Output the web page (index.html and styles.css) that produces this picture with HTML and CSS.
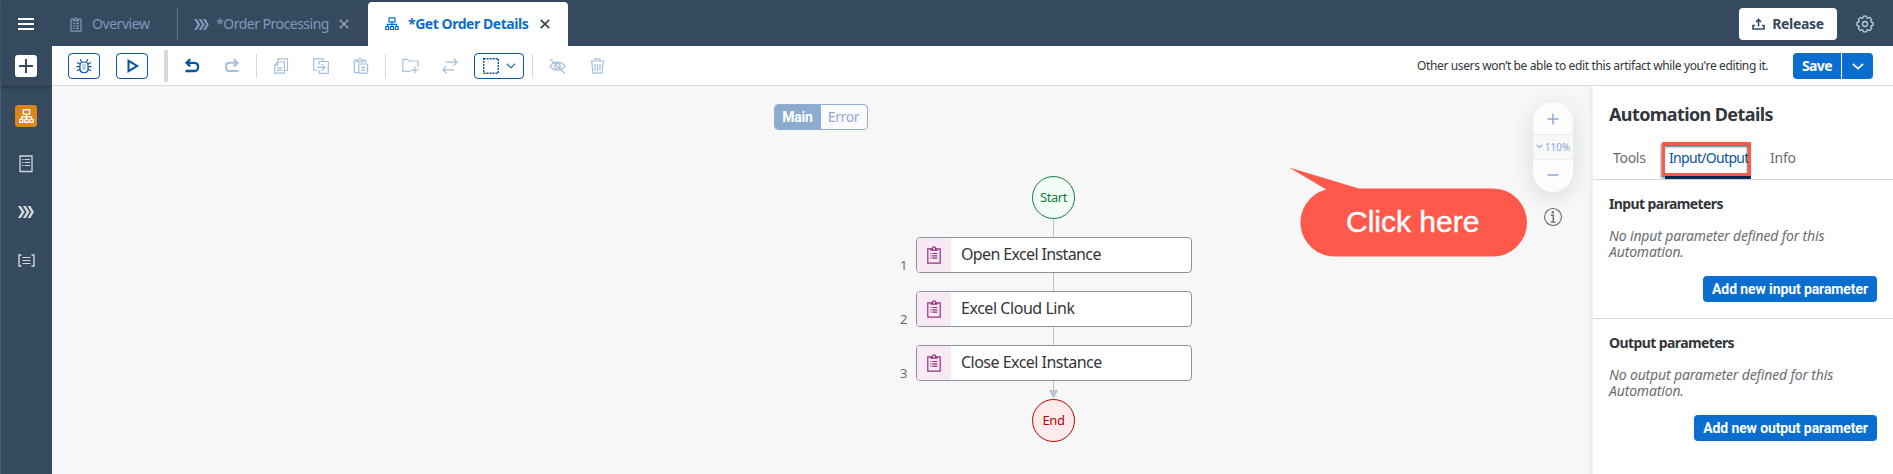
FILE: index.html
```html
<!DOCTYPE html>
<html lang="en">
<head>
<meta charset="utf-8">
<title>Automation Editor</title>
<link rel="stylesheet" href="styles.css">
</head>
<body>
<svg class="defs" aria-hidden="true">
  <symbol id="tree" viewBox="0 0 14 14"><path d="M4 .8h6v4H4zM7 4.8v4.4M2.4 9.5V7.3h9.2v2.2M.7 9.6h2.9v2.9H.7zM5.5 9.6h2.9v2.9H5.5zM10.3 9.6h2.9v2.9h-2.9z" fill="none" stroke="currentColor" stroke-width="1.2"/></symbol>
  <symbol id="chevrons" viewBox="0 0 16 12"><path d="M0 .1h2.8L6.6 6l-3.8 5.9H0L3.7 6zM4.9.1h2.8L11.5 6l-3.8 5.9H4.9L8.6 6zM9.6.1h2.8L16 6l-3.6 5.9H9.6L13.3 6z" fill="currentColor"/></symbol>
  <symbol id="close" viewBox="0 0 10 10"><path d="M.8.8l8.4 8.4M9.2.8L.8 9.2" fill="none" stroke="currentColor" stroke-width="1.8"/></symbol>
  <symbol id="clipboard" viewBox="0 0 14 18"><path d="M4 2.9H.8v14.3h12.4V2.9H10M4 4.2V2.8h1.4C5.4.3 8.6.3 8.6 2.8H10v1.4z" fill="none" stroke="currentColor" stroke-width="1.2"/><path d="M3.4 7.5h1M5.3 7.5h5M3.4 9.8h1M5.3 9.8h5M3.4 12.1h1M5.3 12.1h5" stroke="currentColor" stroke-width="1.2"/></symbol>
</svg>
<div class="app">
  <nav class="rail">
    <div class="rail-top">
      <svg class="menu" width="16" height="12" viewBox="0 0 16 12"><path d="M0 1h16M0 6h16M0 11h16" stroke="#fff" stroke-width="2"/></svg>
      <span class="rail-box add"><svg width="22" height="22" viewBox="0 0 22 22"><path d="M11 4v14M4 11h14" stroke="#354a5f" stroke-width="2"/></svg></span>
    </div>
    <span class="rail-box selected"><svg width="15" height="15"><use href="#tree"/></svg></span>
    <span class="rail-box"><svg width="14" height="18" viewBox="0 0 14 18"><path d="M1 1h12v15.5H1z" fill="none" stroke="currentColor" stroke-width="1.3"/><path d="M3 4.5h1.5M5.5 4.5H11M3 7.5h1.5M5.5 7.5H11M3 10.5h1.5M5.5 10.5H11" stroke="currentColor"/></svg></span>
    <span class="rail-box"><svg width="16" height="12"><use href="#chevrons"/></svg></span>
    <span class="rail-box"><svg width="17" height="13" viewBox="0 0 17 13"><path d="M3.5 1H1v11h2.5M13.5 1H16v11h-2.5" fill="none" stroke="currentColor" stroke-width="1.4"/><path d="M4.5 3.5h8M4.5 6.5h8M4.5 9.5h8" stroke="currentColor" stroke-width="1.2"/></svg></span>
  </nav>
  <div class="main">
    <header class="header">
      <div class="tab overview">
        <svg width="12" height="15" viewBox="0 0 12 15"><path d="M3.5 2.2H1v12h10v-12H8.5M3.5 3.6V2H5c0-1.7 2-1.7 2 0h1.5v1.6z" fill="none" stroke="currentColor" stroke-width="1.2"/><path d="M3 6.4h1.6M5.8 6.4H9M3 8.9h1.6M5.8 8.9H9M3 11.4h1.6M5.8 11.4H9" stroke="currentColor" stroke-width="1.3"/></svg>
        <span class="tab-text t-overview">Overview</span>
      </div>
      <div class="tab processing">
        <svg width="15" height="11"><use href="#chevrons"/></svg>
        <span class="tab-text t-processing">*Order Processing</span>
        <svg class="x" width="10" height="10"><use href="#close"/></svg>
      </div>
      <div class="tab active">
        <svg width="14" height="14"><use href="#tree"/></svg>
        <span class="tab-text t-details">*Get Order Details</span>
        <svg class="x" width="10" height="10"><use href="#close"/></svg>
      </div>
      <button class="release"><svg width="13" height="12" viewBox="0 0 13 12"><path d="M3 7.5H1V11h11V7.5h-2M6.5 8.5V2M4 4l2.5-2.6L9 4" fill="none" stroke="currentColor" stroke-width="1.6"/></svg><span>Release</span></button>
      <svg class="gear" width="18" height="18" viewBox="0 0 18 18" fill="none" stroke="currentColor" stroke-width="1.3"><path d="M7.5 1.1h3l.4 1.7 1.2.5 1.5-.9 2.1 2.1-.9 1.5.5 1.2 1.7.4v2.8l-1.7.4-.5 1.2.9 1.5-2.1 2.1-1.5-.9-1.2.5-.4 1.7h-3l-.4-1.7-1.2-.5-1.5.9-2.1-2.1.9-1.5-.5-1.2-1.7-.4V7.6l1.7-.4.5-1.2-.9-1.5 2.1-2.1 1.5.9 1.2-.5z"/><circle cx="9" cy="9" r="2.5"/></svg>
    </header>
    <div class="toolbar">
      <span class="boxed"><svg width="16" height="16" viewBox="0 0 16 16" fill="none" stroke="currentColor"><path d="M4 7c0-4 8-4 8 0v4c0 5-8 5-8 0zM5.5 3.8L4.2 1.2M10.5 3.8l1.3-2.6M4 6L1 4.5M4 8.7H.5M4 11.2l-3 1.6M12 6l3-1.5M12 8.7h3.5M12 11.2l3 1.6" stroke-width="1.2"/><path d="M6 7h4M6 9h4M6 11h4" stroke-opacity=".5"/></svg></span>
      <span class="boxed play"><svg width="14" height="16" viewBox="0 0 14 16"><path d="M2.5 2.8v10.4L11.2 8z" fill="none" stroke="currentColor" stroke-width="2"/></svg></span>
      <i class="thick"></i>
      <svg class="undo" width="16" height="16" viewBox="0 0 16 16"><path d="M6.2 1.2L2.5 4.8l3.7 3.6M3 4.8h7.5c4.8 0 4.8 8.2 0 8.2H1.5" fill="none" stroke="currentColor" stroke-width="2.3"/></svg>
      <svg class="ico redo" width="16" height="16" viewBox="0 0 16 16"><path d="M9.8 1.2l3.7 3.6-3.7 3.6M13 4.8H5.5C.7 4.8.7 13 5.5 13h9" fill="none" stroke="currentColor" stroke-width="2.1"/></svg>
      <i class="sep s1"></i>
      <svg class="ico copy" width="16" height="16" viewBox="0 0 16 16" fill="none" stroke="currentColor" stroke-width="1.2"><path d="M4.6 4h6.8v11.2H1.6V7.2zM1.8 7.2h3V4.3M5 4V.9h9.5v11.6h-3M3.8 9.8h5.4M3.8 12.2h5.4"/></svg>
      <svg class="ico dup" width="16" height="16" viewBox="0 0 16 16" fill="none" stroke="currentColor" stroke-width="1.2"><path d="M4.2 12.2H.7V.8h9.6v2.6M6.2 6.4V3.5h9.1v11.8H6.2v-3M4 9.4h7.5M8.5 6l3.3 3.4-3.3 3.4"/></svg>
      <svg class="ico paste" width="16" height="16" viewBox="0 0 16 16" fill="none" stroke="currentColor" stroke-width="1.2"><path d="M5.3 14.7H1.4V2.3H4M9.8 2.3h2.8v2.6M4 3.8V2.2h1.4c0-2 3.1-2 3.1 0h1.4v1.6zM5.8 6h8.8v9.2H5.8zM8 9.7h4.4M8 12.2h4.4"/></svg>
      <i class="sep s2"></i>
      <svg class="ico folder" width="17" height="16" viewBox="0 0 17 16" fill="none" stroke="currentColor" stroke-width="1.2"><path d="M8.5 13.4H.8V1.4h4.6L7 3h9v6M12.8 8.7v6.8M9.3 12.1h7"/></svg>
      <svg class="ico swap" width="16" height="16" viewBox="0 0 16 16" fill="none" stroke="currentColor" stroke-width="1.3"><path d="M4 4.2h11M11.6.8L15 4.2l-3.4 3.4M12 11.8H1M4.4 8.4L1 11.8l3.4 3.4"/></svg>
      <span class="boxed select"><svg width="16" height="16" viewBox="0 0 16 16"><path d="M.7.7h14.6v14.6H.7z" fill="none" stroke="currentColor" stroke-width="1.4" stroke-dasharray="2 1"/></svg><svg width="10" height="6" viewBox="0 0 10 6"><path d="M.7.7L5 4.8 9.3.7" fill="none" stroke="#4d82bf" stroke-width="1.5"/></svg></span>
      <i class="sep s3"></i>
      <svg class="ico eye" width="17" height="16" viewBox="0 0 17 16" fill="none" stroke="currentColor" stroke-width="1.2"><path d="M1 8.2C4.8 2.8 12.2 2.8 16 8.2 12.2 13.6 4.8 13.6 1 8.2zM1 1l15 14.5"/><circle cx="8.5" cy="8.2" r="2.8"/></svg>
      <svg class="ico trash" width="15" height="16" viewBox="0 0 15 16" fill="none" stroke="currentColor" stroke-width="1.2"><path d="M.5 3h14M5 2.8V.8h5v2M1.8 3.2l1 12h9.4l1-12M5 6v6.8M7.5 6v6.8M10 6v6.8"/></svg>
      <span class="lock-note">Other users won’t be able to edit this artifact while you're editing it.</span>
      <div class="split"><button class="save">Save</button><button class="more"><svg width="12" height="7" viewBox="0 0 12 7"><path d="M.8.8L6 5.6 11.2.8" fill="none" stroke="#fff" stroke-width="1.7"/></svg></button></div>
    </div>
    <div class="work">
      <section class="canvas">
        <div class="segmented"><span class="seg on">Main</span><span class="seg">Error</span></div>
        <div class="flow">
          <div class="terminal start">Start</div>
          <i class="link"></i>
          <div class="step"><span class="num">1</span><span class="step-icon"><svg width="14" height="18"><use href="#clipboard"/></svg></span><span class="name n1">Open Excel Instance</span></div>
          <i class="link"></i>
          <div class="step"><span class="num">2</span><span class="step-icon"><svg width="14" height="18"><use href="#clipboard"/></svg></span><span class="name n2">Excel Cloud Link</span></div>
          <i class="link"></i>
          <div class="step"><span class="num">3</span><span class="step-icon"><svg width="14" height="18"><use href="#clipboard"/></svg></span><span class="name n3">Close Excel Instance</span></div>
          <svg class="arrow" width="9" height="18" viewBox="0 0 9 18"><path d="M4.5 0v10" stroke="#bfbfbf"/><path d="M0 9h9L4.5 18z" fill="#c4c4c4"/></svg>
          <div class="terminal end">End</div>
        </div>
        <div class="zoom">
          <span class="zoom-in"><svg width="12" height="12" viewBox="0 0 12 12"><path d="M6 .5v11M.5 6h11" stroke="currentColor" stroke-width="1.5"/></svg></span>
          <span class="zoom-level"><svg width="7" height="5" viewBox="0 0 7 5"><path d="M.6 1l2.9 2.6L6.4 1" fill="none" stroke="currentColor" stroke-width="1.1"/></svg>110%</span>
          <span class="zoom-out"><svg width="12" height="12" viewBox="0 0 12 12"><path d="M.5 6h11" stroke="currentColor" stroke-width="1.5"/></svg></span>
        </div>
        <svg class="info" width="20" height="20" viewBox="0 0 20 20"><circle cx="10" cy="10" r="8.5" fill="none" stroke="#6a6d70" stroke-width="1.1"/><circle cx="9.8" cy="5.3" r="1.2" fill="#6a6d70"/><path d="M7.8 8.2h2.5v6.6M7.6 15.1h5" fill="none" stroke="#6a6d70" stroke-width="1.4"/></svg>
        <div class="callout">
          <svg width="240" height="92" viewBox="0 0 240 92"><path d="M0 .5L70 21.5H204a34 34 0 0 1 0 68H45.5a34 34 0 0 1-8.2-67z" fill="#ff594c"/></svg>
          <span class="callout-text">Click here</span>
        </div>
      </section>
      <aside class="panel">
        <h2 class="title"><span>Automation Details</span></h2>
        <div class="ptabs"><span class="p-tools">Tools</span><span class="p-io">Input/Output<i class="highlight"></i></span><span class="p-info">Info</span></div>
        <section class="params">
          <h3 class="h-in">Input parameters</h3>
          <p><span class="i1">No input parameter defined for this</span><br><span class="i2">Automation.</span></p>
          <button class="add-in"><span>Add new input parameter</span></button>
        </section>
        <section class="params second">
          <h3 class="h-out">Output parameters</h3>
          <p><span class="o1">No output parameter defined for this</span><br><span class="i2">Automation.</span></p>
          <button class="add-out"><span>Add new output parameter</span></button>
        </section>
      </aside>
    </div>
  </div>
</div>
</body>
</html>
```
FILE: styles.css
```css
* { box-sizing: border-box; }
body { margin: 0; font: 14px/16px "Noto Sans", "Open Sans", sans-serif; color: #32363a; overflow: hidden; }
svg { display: block; flex: none; }
.defs { position: absolute; width: 0; height: 0; }
button { border: 0; padding: 0; font: bold 14px/16px "Noto Sans", sans-serif; white-space: nowrap; display: flex; align-items: center; justify-content: center; }
h2, h3, p { margin: 0; }
span { white-space: nowrap; }

.app { display: grid; grid-template-columns: 52px 1fr; height: 474px; }
.rail { background: #354a5f; border-left: 1px solid #4d6175; display: flex; flex-direction: column; align-items: center; color: #d3d7db; padding-right: 1px; }
.rail-top { align-self: stretch; height: 86px; margin-right: -1px; display: flex; flex-direction: column; align-items: center; padding: 18px 1px 0 0; box-shadow: 0 1px 4px rgba(0,0,0,.35); margin-bottom: 19px; }
.rail-box { width: 22px; height: 22px; border-radius: 3px; display: flex; align-items: center; justify-content: center; margin-bottom: 26px; }
.add { background: #fff; margin: 25px 0 0; }
.selected { background: #d9851a; color: #fff; }

.main { display: flex; flex-direction: column; min-width: 0; }
.header { height: 46px; flex: none; background: #354a5f; display: flex; color: #7b9abd; }
.tab { display: flex; align-items: center; padding-top: 2px; }
.overview { width: 125px; padding-left: 18px; gap: 10px; }
.overview::after { content: ""; width: 1px; height: 32px; background: #5e7389; margin-left: auto; margin-right: -1px; }
.processing { width: 191px; padding-left: 17px; gap: 7px; }
.processing .x { color: #8a98a6; }
.tab .x { margin-left: auto; margin-right: 19px; }
.active { width: 200px; height: 44px; margin-top: 2px; background: #fff; border-radius: 4px 4px 0 0; color: #0a6ed1; font-weight: bold; padding: 0 0 0 17px; gap: 9px; }
.active .x { color: #354a5f; margin-right: 18px; }
.t-overview { letter-spacing: -.45px; }
.t-processing { letter-spacing: -.5px; }
.t-details { letter-spacing: -.45px; }
.release { width: 98px; height: 32px; margin: 8px 19px 0 auto; border-radius: 4px; background: #fff; color: #354a5f; gap: 7px; letter-spacing: -.3px; }
.gear { margin: 15px 19px 0 0; color: #b9cce2; }

.toolbar { height: 40px; flex: none; background: #fff; border-bottom: 1px solid #d9d9d9; display: flex; align-items: center; color: #0854a0; padding: 1px 20px 0 16px; }
.boxed { width: 32px; height: 26px; border: 1px solid #0854a0; border-radius: 4px; display: flex; align-items: center; justify-content: center; margin-right: 16px; }
.play { padding-left: 2px; }
.thick { width: 4px; height: 32px; background: #d9d9d9; margin-right: 16px; }
.undo { margin-right: 24px; }
.ico { color: #a6bfdc; }
.sep { width: 1px; height: 24px; background: #d9d9d9; }
.s1 { margin: 0 16px; }
.copy, .dup { margin-right: 24px; }
.s2 { margin: 0 16px; }
.folder { margin-right: 23px; }
.select { width: 50px; gap: 7px; margin: 0 8px 0 16px; }
.s3 { margin-right: 16px; }
.eye { margin-right: 24px; }
.lock-note { margin-left: auto; font-size: 12px; color: #32363a; width: 351px; letter-spacing: -.37px; margin-right: 25px; }
.split { display: flex; gap: 1px; }
.save, .more { height: 26px; background: #0a6ed1; color: #fff; }
.save { width: 48px; border-radius: 4px 0 0 4px; letter-spacing: -.6px; }
.more { width: 31px; border-radius: 0 4px 4px 0; }

.work { flex: 1; display: flex; min-height: 0; }
.canvas { flex: 1; position: relative; overflow: hidden; background: #f7f7f7; border-right: 4px solid #eeeff0; padding-top: 18px; }
.segmented { width: 94px; height: 26px; margin: 0 auto; display: flex; border: 1px solid #93afd1; border-radius: 4px; overflow: hidden; background: #fbfbfb; }
.seg { width: 46px; text-align: center; line-height: 24px; color: #91acd0; letter-spacing: -.35px; }
.seg.on { background: #8dabcf; color: #fff; font: bold 14px/24px Roboto, sans-serif; letter-spacing: -.2px; }
.flow { position: absolute; left: 864px; top: 90px; width: 276px; display: flex; flex-direction: column; align-items: center; }
.terminal { width: 43px; height: 43px; margin-left: -1px; border-radius: 50%; border: 1px solid; display: flex; align-items: center; justify-content: center; font-size: 13px; letter-spacing: -.4px; padding-bottom: 2px; }
.start { background: #f1fdf6; color: #107e3e; }
.end { background: #ffebeb; color: #bb0000; }
.link { width: 1px; height: 18px; background: #bfbfbf; margin-left: -1px; }
.arrow { margin-left: -1px; }
.step { position: relative; width: 276px; height: 36px; border: 1px solid #8b919c; border-radius: 4px; background: #fff; display: flex; align-items: center; font-size: 16px; }
.step-icon { width: 34px; height: 34px; background: #f8eaf5; color: #932f7f; display: flex; align-items: center; justify-content: center; margin-right: 10px; border-radius: 3px 0 0 3px; }
.num { position: absolute; left: -17px; top: 19px; font-size: 13px; color: #6a6d70; }
.name { padding-bottom: 2px; }
.n1 { letter-spacing: -.63px; }
.n2 { letter-spacing: -.45px; }
.n3 { letter-spacing: -.52px; }
.zoom { position: absolute; right: 16px; top: 16px; width: 40px; height: 90px; border-radius: 20px; background: #fcfcfc; color: #8dabcf; display: flex; flex-direction: column; box-shadow: 0 6px 20px rgba(60,90,90,.13), 0 0 28px rgba(60,90,90,.04); }
.zoom span { display: flex; align-items: center; justify-content: center; }
.zoom-in { height: 32px; padding-top: 1px; }
.zoom-level { height: 26px; border: solid #ececec; border-width: 1px 0; background: #f8f8f8; font-size: 10px; gap: 2px; padding-bottom: 1px; }
.zoom-out { height: 30px; }
.info { position: absolute; right: 26px; top: 121px; }
.callout { position: absolute; left: 1237px; top: 81px; }
.callout-text { position: absolute; left: 57px; top: 38px; font: 30px/34px "Liberation Sans", Arial, sans-serif; color: #fff; -webkit-text-stroke: .4px #fff; }

.panel { width: 300px; background: #fff; }
.title { height: 56px; padding: 17px 0 0 16px; font-size: 18px; line-height: 22px; letter-spacing: -.6px; }
.ptabs { height: 38px; border-bottom: 1px solid #d9d9d9; display: flex; padding-left: 20px; color: #6a6d70; line-height: 32px; }
.p-tools { width: 52px; letter-spacing: -.3px; }
.p-io { position: relative; width: 86px; padding-left: 4px; color: #0854a0; border-bottom: 3px solid #063d78; letter-spacing: -.68px; }
.p-info { margin-left: 19px; letter-spacing: -.2px; }
.highlight { position: absolute; left: -3px; top: 0; width: 89px; height: 34px; border: 3px solid #ff594c; box-shadow: -1px 2px 2px rgba(0,0,0,.5), inset -1px 2px 2px rgba(0,0,0,.55); }
.params { height: 139px; border-bottom: 1px solid #d9d9d9; padding: 16px 16px 0 16px; display: flex; flex-direction: column; }
.second { border: 0; }
h3 { font-size: 14px; line-height: 16px; }
.h-in, .h-out { letter-spacing: -.6px; }
.params p { margin-top: 16px; font-style: italic; color: #6a6d70; }
.i1, .o1, .i2 { letter-spacing: -.16px; }
.params button { align-self: flex-end; margin-top: 16px; height: 26px; border-radius: 4px; background: #0a6ed1; color: #fff; font-family: Roboto, sans-serif; letter-spacing: -.1px; }
.add-in { width: 174px; }
.add-out { width: 183px; }
```
